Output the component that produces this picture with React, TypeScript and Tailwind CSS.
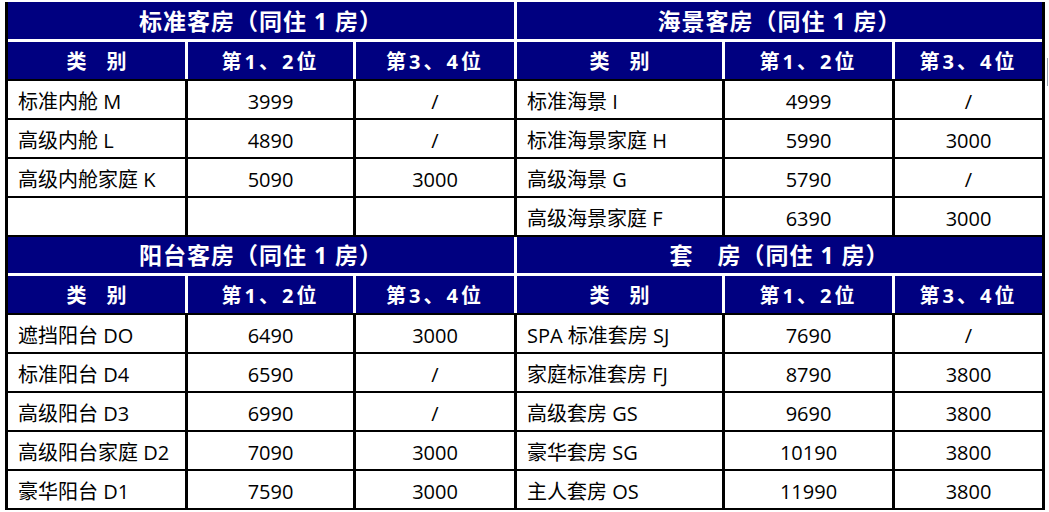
import React from "react";

type Row = [string, string, string];

const W = ["w-[177px]", "w-[165px]", "w-[158px]", "w-[205px]", "w-[167px]", "w-[147px]"];

const block1 = {
  left: "标准客房（同住 1 房）",
  right: "海景客房（同住 1 房）",
  titleH: "h-[37px]",
  rows: [
    [["标准内舱 M", "3999", "/"], ["标准海景 I", "4999", "/"]],
    [["高级内舱 L", "4890", "/"], ["标准海景家庭 H", "5990", "3000"]],
    [["高级内舱家庭 K", "5090", "3000"], ["高级海景 G", "5790", "/"]],
    [["", "", ""], ["高级海景家庭 F", "6390", "3000"]],
  ] as [Row, Row][],
};

const block2 = {
  left: "阳台客房（同住 1 房）",
  right: "套　房（同住 1 房）",
  titleH: "h-[36px]",
  rows: [
    [["遮挡阳台 DO", "6490", "3000"], ["SPA 标准套房 SJ", "7690", "/"]],
    [["标准阳台 D4", "6590", "/"], ["家庭标准套房 FJ", "8790", "3800"]],
    [["高级阳台 D3", "6990", "/"], ["高级套房 GS", "9690", "3800"]],
    [["高级阳台家庭 D2", "7090", "3000"], ["豪华套房 SG", "10190", "3800"]],
    [["豪华阳台 D1", "7590", "3000"], ["主人套房 OS", "11990", "3800"]],
  ] as [Row, Row][],
};

const headers = ["类　别", "第1、2位", "第3、4位"];

function Block({ b }: { b: typeof block1 }) {
  return (
    <div className="flex flex-col">
      <div className="flex gap-[3px] bg-white">
        <div className={`w-[506px] ${b.titleH} bg-[#000080] text-white font-bold text-[23px] flex items-center justify-center tracking-[1px] pt-[1px]`}>
          {b.left}
        </div>
        <div className={`w-[525px] ${b.titleH} bg-[#000080] text-white font-bold text-[23px] flex items-center justify-center tracking-[1px] pt-[1px]`}>
          {b.right}
        </div>
      </div>
      <div className="flex gap-[3px] bg-white pt-[3px]">
        {[0, 1, 2, 3, 4, 5].map((i) => (
          <div
            key={i}
            className={`${W[i]} h-[37px] bg-[#000080] text-white font-bold text-[20px] flex items-center justify-center pt-[2px] ${i % 3 === 0 ? "" : "tracking-[3px]"}`}
          >
            {headers[i % 3]}
          </div>
        ))}
      </div>
      <div className="flex flex-col gap-[2px] bg-black py-[2px]">
        {b.rows.map((pair, ri) => (
          <div key={ri} className="flex gap-[3px]">
            {[...pair[0], ...pair[1]].map((t, ci) => (
              <div
                key={ci}
                className={`${W[ci]} h-[37px] bg-white text-black text-[20px] flex items-center pt-[4px] ${ci % 3 === 0 ? "justify-start pl-[10px]" : "justify-center"}`}
              >
                {t}
              </div>
            ))}
          </div>
        ))}
      </div>
    </div>
  );
}

export default function App() {
  return (
    <div
      className="relative w-[1049px] h-[512px] bg-white overflow-hidden pt-[2px] pl-[5px]"
      style={{ fontFamily: '"Open Sans", "Noto Sans CJK SC", sans-serif' }}
    >
      <div className="w-[1040px] border-l-[3px] border-r-[3px] border-black">
        <Block b={block1} />
        <Block b={block2} />
      </div>
      <div className="absolute left-[1047px] top-[58px] w-[1px] h-[28px] bg-gray-400" />
    </div>
  );
}
